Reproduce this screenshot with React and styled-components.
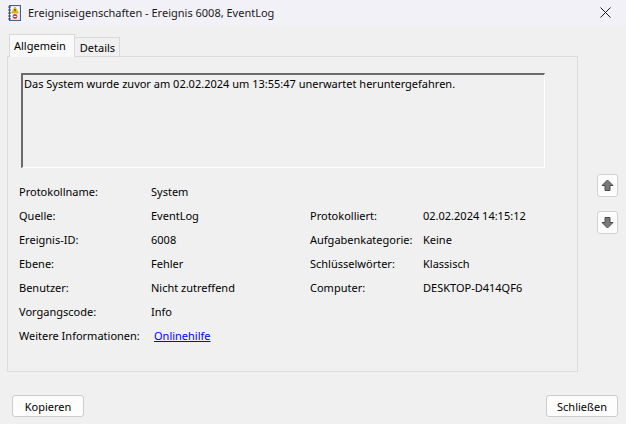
import React from "react";
import styled, { createGlobalStyle } from "styled-components";

const Global = createGlobalStyle`
  html, body { margin: 0; padding: 0; background: #f0f0f0; }
  body { font-family: "Noto Sans", "Open Sans", sans-serif; font-size: 11px; color: #000; }
  * { box-sizing: border-box; }
`;

const Window = styled.div`
  width: 626px;
  height: 424px;
  display: flex;
  flex-direction: column;
  background: #f0f0f0;
  overflow: hidden;
`;

const TitleBar = styled.div`
  height: 26px;
  flex: none;
  display: flex;
  align-items: center;
  padding-left: 8px;
  padding-bottom: 1px;
  background: #f3f1f8;
`;

const TitleText = styled.span`
  margin-left: 6px;
  font-size: 11px;
  color: #1a1a1a;
`;

const CloseBox = styled.div`
  margin-left: auto;
  width: 46px;
  height: 26px;
  display: flex;
  align-items: center;
  justify-content: center;
  padding-left: 4px;
`;

const Main = styled.div`
  display: flex;
  padding: 8px 0 0 7px;
`;

const LeftCol = styled.div`
  width: 571px;
  display: flex;
  flex-direction: column;
`;

const TabBar = styled.div`
  display: flex;
  align-items: flex-end;
  height: 22px;
  padding-left: 2px;
`;

const Tab = styled.div`
  position: relative;
  z-index: ${(p) => (p.$active ? 2 : 1)};
  height: ${(p) => (p.$active ? "23px" : "20px")};
  margin-bottom: -1px;
  margin-left: ${(p) => (p.$active ? "0" : "-1px")};
  padding: ${(p) => (p.$active ? "2px 8px 0 4px" : "1px 4px 0 5px")};
  background: ${(p) => (p.$active ? "#f9f9f9" : "#f0f0f0")};
  border: 1px solid #d9d9d9;
  border-bottom: ${(p) => (p.$active ? "none" : "1px solid #d9d9d9")};
  font-size: 11px;
  line-height: 17px;
`;

const Panel = styled.div`
  height: 316px;
  border: 1px solid #dcdcdc;
  background: #f0f0f0;
  padding: 16px 0 0 13px;
  display: flex;
  flex-direction: column;
`;

const MessageBox = styled.div`
  width: 524px;
  height: 95px;
  border-top: 2px solid #6b6b6b;
  border-left: 2px solid #6b6b6b;
  border-right: 1px solid #ffffff;
  border-bottom: 1px solid #ffffff;
  padding: 1px 0 0 1px;
  font-size: 11px;
  line-height: 16px;
`;

const Fields = styled.div`
  margin-top: 11px;
  margin-left: -2px;
  display: grid;
  grid-template-columns: 132px 159px 113px auto;
  grid-auto-rows: 24px;
  align-items: center;
  font-size: 11px;
`;

const Label = styled.span`
  color: #000;
`;

const Value = styled.span`
  color: #000;
`;

const Link = styled.a`
  color: #0000ff;
  text-decoration: underline;
  margin-left: 3px;
  cursor: pointer;
`;

const SideCol = styled.div`
  margin-left: 19px;
  padding-top: 140px;
  display: flex;
  flex-direction: column;
  gap: 14px;
`;

const ArrowButton = styled.div`
  width: 21px;
  height: 23px;
  background: #fdfdfd;
  border: 1px solid #d0d0d0;
  border-radius: 3px;
  display: flex;
  align-items: center;
  justify-content: center;
`;

const Footer = styled.div`
  margin-top: auto;
  display: flex;
  justify-content: space-between;
  padding: 0 8px 7px 12px;
`;

const Button = styled.div`
  width: 72px;
  height: 22px;
  background: #fdfdfd;
  border: 1px solid #cccccc;
  border-radius: 3px;
  display: flex;
  align-items: center;
  justify-content: center;
  font-size: 11px;
`;

const AppIcon = () => (
  <svg width="14" height="16" viewBox="0 0 14 16">
    <rect x="1.5" y="0.5" width="11" height="15" fill="#dfe6f2" stroke="#4a5f8a" />
    <rect x="3" y="2" width="8" height="12" fill="#f7f8fb" />
    {[2, 5, 8, 11, 14].map((y) => (
      <line key={y} x1="0" y1={y} x2="3" y2={y} stroke="#3b4a6b" strokeWidth="1" />
    ))}
    <path d="M7 2 L10.5 8 L3.5 8 Z" fill="#f5c400" stroke="#b08a00" strokeWidth="0.5" />
    <rect x="6.6" y="4" width="0.8" height="2.3" fill="#000" />
    <circle cx="7" cy="11.5" r="2.4" fill="#d83a3a" />
    <rect x="5.6" y="11" width="2.8" height="1" fill="#fff" />
  </svg>
);

const CloseIcon = () => (
  <svg width="11" height="11" viewBox="0 0 11 11">
    <path d="M0.5 0.5 L10.5 10.5 M10.5 0.5 L0.5 10.5" stroke="#1a1a1a" strokeWidth="1" />
  </svg>
);

const ArrowIcon = ({ down }) => (
  <svg width="13" height="13" viewBox="0 0 13 13" style={down ? { transform: "rotate(180deg)" } : undefined}>
    <path d="M6.5 1 L12 6.5 L9 6.5 L9 11.5 L4 11.5 L4 6.5 L1 6.5 Z" fill="#7a7a7a" stroke="#4a4a4a" strokeWidth="1" strokeLinejoin="round" />
  </svg>
);

const rows = [
  ["Protokollname:", "System", "", ""],
  ["Quelle:", "EventLog", "Protokolliert:", "02.02.2024 14:15:12"],
  ["Ereignis-ID:", "6008", "Aufgabenkategorie:", "Keine"],
  ["Ebene:", "Fehler", "Schlüsselwörter:", "Klassisch"],
  ["Benutzer:", "Nicht zutreffend", "Computer:", "DESKTOP-D414QF6"],
  ["Vorgangscode:", "Info", "", ""],
];

export default function App() {
  return (
    <>
      <Global />
      <Window>
        <TitleBar>
          <AppIcon />
          <TitleText>Ereigniseigenschaften - Ereignis 6008, EventLog</TitleText>
          <CloseBox>
            <CloseIcon />
          </CloseBox>
        </TitleBar>
        <Main>
          <LeftCol>
            <TabBar>
              <Tab $active>Allgemein</Tab>
              <Tab>Details</Tab>
            </TabBar>
            <Panel>
              <MessageBox>
                Das System wurde zuvor am 02.02.2024 um 13:55:47 unerwartet heruntergefahren.
              </MessageBox>
              <Fields>
                {rows.map((r, i) => (
                  <React.Fragment key={i}>
                    <Label>{r[0]}</Label>
                    <Value>{r[1]}</Value>
                    <Label>{r[2]}</Label>
                    <Value>{r[3]}</Value>
                  </React.Fragment>
                ))}
                <Label>Weitere Informationen:</Label>
                <Value>
                  <Link>Onlinehilfe</Link>
                </Value>
                <span />
                <span />
              </Fields>
            </Panel>
          </LeftCol>
          <SideCol>
            <ArrowButton>
              <ArrowIcon />
            </ArrowButton>
            <ArrowButton>
              <ArrowIcon down />
            </ArrowButton>
          </SideCol>
        </Main>
        <Footer>
          <Button>Kopieren</Button>
          <Button>Schließen</Button>
        </Footer>
      </Window>
    </>
  );
}
